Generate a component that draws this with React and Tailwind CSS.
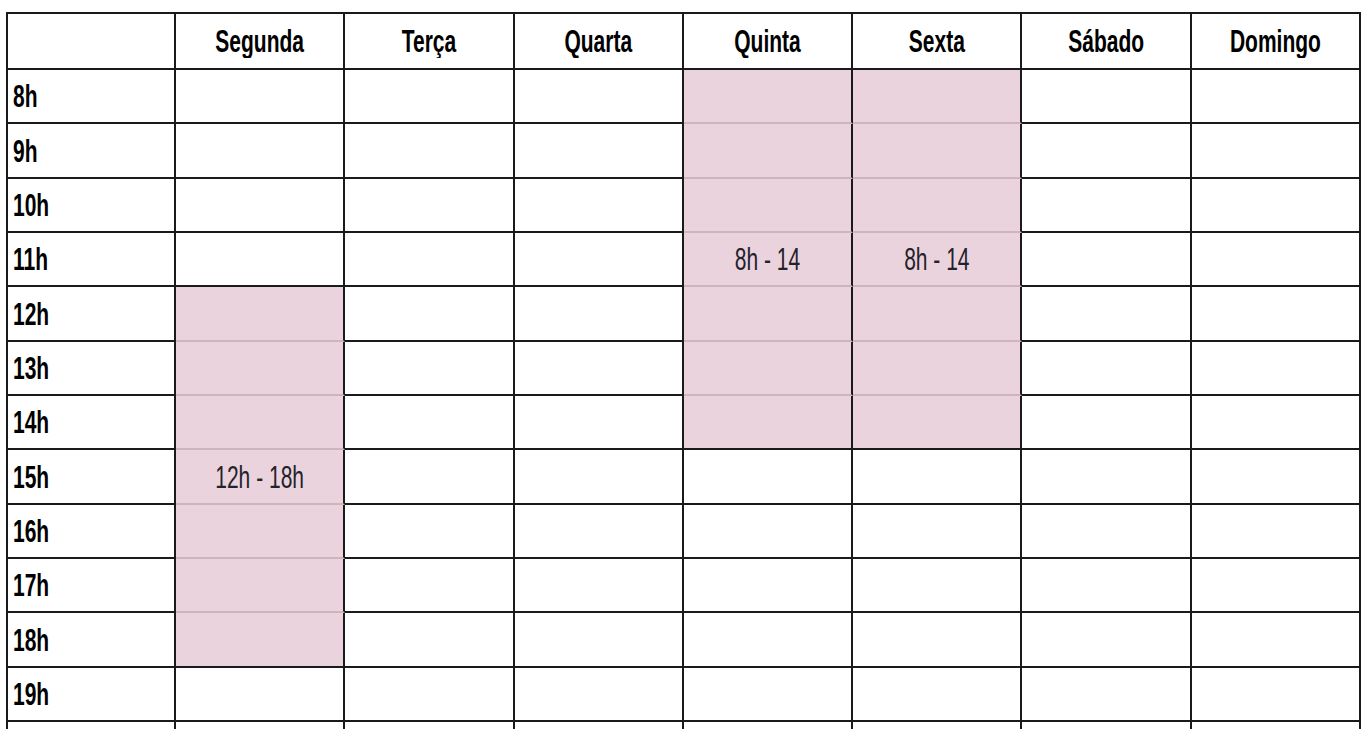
const days = ["Segunda", "Terça", "Quarta", "Quinta", "Sexta", "Sábado", "Domingo"];
const hours = [8, 9, 10, 11, 12, 13, 14, 15, 16, 17, 18, 19];

// blocos ocupados: coluna do dia, hora inicial, hora final
const blocks = [
  { day: 0, from: 12, to: 18, label: "12h - 18h" },
  { day: 3, from: 8, to: 14, label: "8h - 14" },
  { day: 4, from: 8, to: 14, label: "8h - 14" },
];

const findBlock = (day, hour) =>
  blocks.find((b) => b.day === day && hour >= b.from && hour <= b.to);

const Stretch = ({ children, className = "" }) => (
  <span className={`inline-block scale-y-[1.5] ${className}`}>{children}</span>
);

const App = () => {
  return (
    <div className="min-h-screen bg-white pt-3 pl-[6px] font-['Liberation_Sans',Arial,sans-serif]">
      <div className="grid w-max grid-cols-[168px_repeat(7,169.3px)] grid-rows-[56px] auto-rows-[54.33px] border-l-2 border-t-2 border-[#1a1a1a]">
        <div className="border-b-2 border-r-2 border-[#1a1a1a]" />
        {days.map((d) => (
          <div
            key={d}
            className="flex items-center justify-center border-b-2 border-r-2 border-[#1a1a1a] text-[21px] font-bold text-black"
          >
            <Stretch>{d}</Stretch>
          </div>
        ))}

        {hours.map((h) => (
          <div key={h} className="contents">
            <div className="flex items-center border-b-2 border-r-2 border-[#1a1a1a] pl-[5px] text-[21px] font-bold text-black">
              <Stretch>{h}h</Stretch>
            </div>
            {days.map((d, i) => {
              const b = findBlock(i, h);
              if (!b) {
                return <div key={d} className="border-b-2 border-r-2 border-[#1a1a1a]" />;
              }
              const mid = Math.floor((b.from + b.to) / 2);
              return (
                <div
                  key={d}
                  className={`flex items-center justify-center border-r-2 border-r-[#1a1a1a] bg-[#ebd3dd] text-[21px] text-[#22222b] ${
                    h === b.to ? "border-b-2 border-b-[#1a1a1a]" : "border-b-2 border-b-[#cdb5be]"
                  }`}
                >
                  {h === mid && <Stretch>{b.label}</Stretch>}
                </div>
              );
            })}
          </div>
        ))}

        {/* linha seguinte, cortada na borda da tela */}
        <div className="border-r-2 border-[#1a1a1a]" />
        {days.map((d) => (
          <div key={d} className="border-r-2 border-[#1a1a1a]" />
        ))}
      </div>
    </div>
  );
};

export default App;
